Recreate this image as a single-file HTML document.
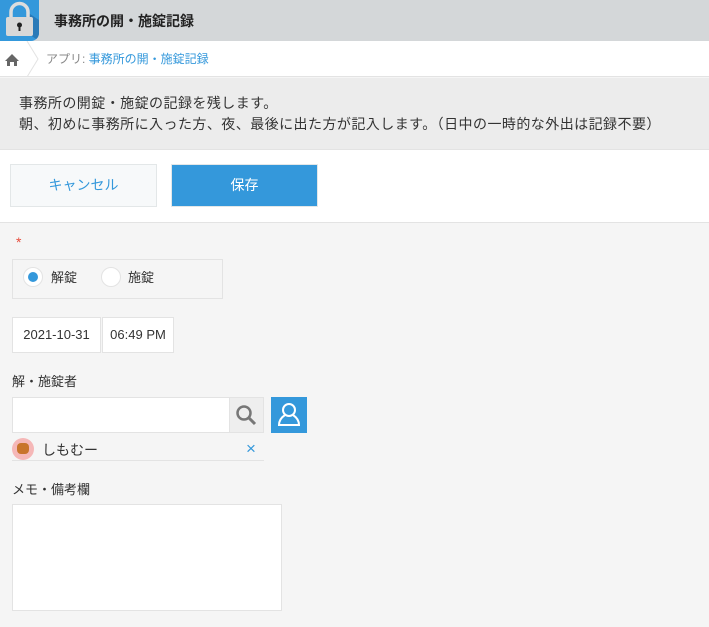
<!DOCTYPE html>
<html><head><meta charset="utf-8"><style>
*{box-sizing:border-box;margin:0;padding:0}
body{width:709px;height:627px;background:#f5f5f5;font-family:"Liberation Sans","Noto Sans CJK JP",sans-serif;font-size:13px;color:#333;position:relative;overflow:hidden}
.a{position:absolute}
</style></head><body>
<div class="a" style="left:0;top:0;width:709px;height:41px;background:#d4d7d9"></div>
<div class="a" style="left:0;top:0;width:39px;height:41px;background:#3498db;border-radius:0 0 8px 0;overflow:hidden">
<svg width="39" height="41"><polygon points="14,24 39,41 39,20 30,14" fill="#2a7ab8"/><path d="M11 18 V12 a8.5 8.5 0 0 1 17 0 V18" fill="none" stroke="#ddd" stroke-width="3.5"/><rect x="6" y="17" width="27" height="19" rx="2" fill="#d8d8d8"/><circle cx="19.5" cy="25" r="2.5" fill="#222"/><rect x="18.5" y="25" width="2" height="6" fill="#222"/></svg></div>
<div class="a" style="left:54px;top:11px;font-size:14px;font-weight:bold;color:#222">事務所の開・施錠記録</div>
<div class="a" style="left:0;top:41px;width:709px;height:36px;background:#fff;border-bottom:1px solid #e3e3e3"></div>
<svg class="a" style="left:0;top:41px" width="45" height="36"><path d="M5 20 L12 13 L19 20 H17 V25 H14 V21 H10 V25 H7 V20 Z" fill="#666"/><path d="M27 0 L38 18 L27 36" fill="none" stroke="#e3e3e3"/></svg>
<div class="a" style="left:46px;top:50px;font-size:12px;color:#888">アプリ: <span style="color:#3498db">事務所の開・施錠記録</span></div>
<div class="a" style="left:0;top:78px;width:709px;height:72px;background:#ececec"></div>
<div class="a" style="left:19px;top:93px;font-size:14px;line-height:21px;color:#333;letter-spacing:0.45px;white-space:nowrap">事務所の開錠・施錠の記録を残します。<br>朝、初めに事務所に入った方、夜、最後に出た方が記入します。（日中の一時的な外出は記録不要）</div>
<div class="a" style="left:0;top:149px;width:709px;height:74px;background:#fff;border-top:1px solid #e3e3e3;border-bottom:1px solid #e3e3e3"></div>
<div class="a" style="left:10px;top:164px;width:147px;height:43px;background:#f7f9fa;border:1px solid #e3e7e8;color:#3498db;font-size:14px;text-align:center;line-height:41px">キャンセル</div>
<div class="a" style="left:171px;top:164px;width:147px;height:43px;background:#3498db;border:1px solid #e3e7e8;color:#fff;font-size:14px;text-align:center;line-height:41px">保存</div>
<div class="a" style="left:16px;top:234px;color:#e74c3c;font-size:14px">*</div>
<div class="a" style="left:12px;top:259px;width:211px;height:40px;border:1px solid #e3e3e3"></div>
<div class="a" style="left:23px;top:267px;width:20px;height:20px;border-radius:50%;background:#fff;border:1px solid #e3e3e3"></div>
<div class="a" style="left:28px;top:272px;width:10px;height:10px;border-radius:50%;background:#3498db"></div>
<div class="a" style="left:51px;top:267px">解錠</div>
<div class="a" style="left:101px;top:267px;width:20px;height:20px;border-radius:50%;background:#fff;border:1px solid #e3e3e3"></div>
<div class="a" style="left:128px;top:267px">施錠</div>
<div class="a" style="left:12px;top:317px;width:89px;height:36px;background:#fff;border:1px solid #e3e3e3;text-align:center;line-height:34px">2021-10-31</div>
<div class="a" style="left:102px;top:317px;width:72px;height:36px;background:#fff;border:1px solid #e3e3e3;text-align:center;line-height:34px">06:49 PM</div>
<div class="a" style="left:12px;top:371px">解・施錠者</div>
<div class="a" style="left:12px;top:397px;width:252px;height:36px;background:#fff;border:1px solid #e3e3e3"></div>
<div class="a" style="left:229px;top:398px;width:34px;height:34px;background:#eee;border-left:1px solid #e3e3e3"></div>
<svg class="a" style="left:229px;top:398px" width="34" height="34"><circle cx="15" cy="15" r="6.5" fill="none" stroke="#777" stroke-width="2.5"/><path d="M20 20 L26 26" stroke="#777" stroke-width="3"/></svg>
<div class="a" style="left:271px;top:397px;width:36px;height:36px;background:#3498db"></div>
<svg class="a" style="left:271px;top:397px" width="36" height="36"><circle cx="18" cy="13" r="6" fill="none" stroke="#fff" stroke-width="2"/><path d="M14 18 Q8 22 8 28 H28 Q28 22 22 18" fill="none" stroke="#fff" stroke-width="2"/></svg>
<div class="a" style="left:12px;top:438px;width:22px;height:22px;border-radius:50%;background:#f5b7b7"></div>
<div class="a" style="left:17px;top:443px;width:12px;height:11px;border-radius:4px;background:#c8742b"></div>
<div class="a" style="left:42px;top:440px;font-size:14px">しもむー</div>
<div class="a" style="left:246px;top:439px;color:#3498db;font-size:17px">×</div>
<div class="a" style="left:12px;top:460px;width:252px;height:1px;background:#e3e3e3"></div>
<div class="a" style="left:12px;top:479px">メモ・備考欄</div>
<div class="a" style="left:12px;top:504px;width:270px;height:107px;background:#fff;border:1px solid #e3e3e3"></div>
</body></html>
